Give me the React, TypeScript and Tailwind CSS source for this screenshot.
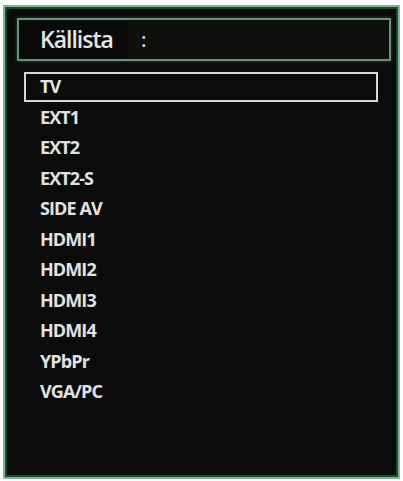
const sources = [
  'TV',
  'EXT1',
  'EXT2',
  'EXT2-S',
  'SIDE AV',
  'HDMI1',
  'HDMI2',
  'HDMI3',
  'HDMI4',
  'YPbPr',
  'VGA/PC',
];

export default function App() {
  const selected = 'TV';

  return (
    <div className="h-[481px] w-[403px] bg-white pt-[5px] pl-[3px] pr-[3px] pb-[2px] font-['Open_Sans',sans-serif]">
      <div className="h-full border-2 border-[#7fb592] bg-[#1d4a31] p-[2px]">
        <div className="flex h-full flex-col bg-[#0b0b0b] pl-[10px] pr-[5px] pt-[9px]">
          {/* Header */}
          <div className="flex h-[43px] items-center border-2 border-[#6b8f78] bg-[#110e0e] shadow-[0_0_3px_#2f5a40]">
            <span className="flex h-full items-center bg-[#0a0a0a] pl-[21px] pr-[14px] text-[23px] font-semibold tracking-[-1px] text-[#e6e6e6]">
              Källista
            </span>
            <span className="ml-[14px] text-[20px] font-semibold text-[#cfcfcf]">:</span>
          </div>

          {/* Source list */}
          <ul className="mt-[11px] ml-[7px] mr-[13px] flex flex-col">
            {sources.map((name) => (
              <li
                key={name}
                className={
                  name === selected
                    ? 'flex h-[30px] items-center border-2 border-[#d8d8d8] pl-[14px] mb-[0.5px]'
                    : 'flex h-[30.5px] items-center border-2 border-transparent pl-[14px]'
                }
              >
                <span className="-mt-[1px] text-[18px] font-bold tracking-[-0.9px] text-[#e2e2e2]">{name}</span>
              </li>
            ))}
          </ul>
        </div>
      </div>
    </div>
  );
}
